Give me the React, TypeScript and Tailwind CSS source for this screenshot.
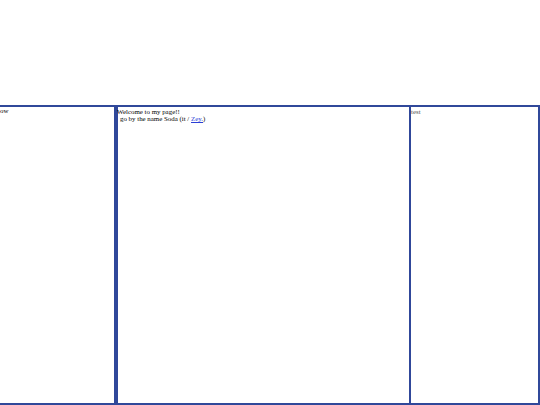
export default function App() {
  return (
    <div
      className="h-[405px] w-[540px] overflow-hidden bg-white text-black"
      style={{ fontFamily: '"Liberation Serif", "Times New Roman", serif' }}
    >
      <div className="mt-[105px] flex h-[300px] text-[6.9px] leading-[7.5px]">
        <div className="w-[116px] shrink-0 overflow-hidden border-2 border-l-0 border-[#30489a]">
          <p className="-mt-[0.5px]">ow</p>
        </div>
        <div className="w-[293px] shrink-0 border-y-2 border-l-2 border-[#30489a]">
          <p className="-ml-[1px] pt-[0.5px]">Welcome to my page!!</p>
          <p className="pl-[2px]">
            go by the name Soda (it /{' '}
            <a href="#" className="text-[#2b3fd6] underline">
              Zey.
            </a>
            )
          </p>
        </div>
        <div className="flex-1 border-2 border-[#30489a]">
          <p className="pt-[0.5px] text-[#555]">test</p>
        </div>
      </div>
    </div>
  );
}
